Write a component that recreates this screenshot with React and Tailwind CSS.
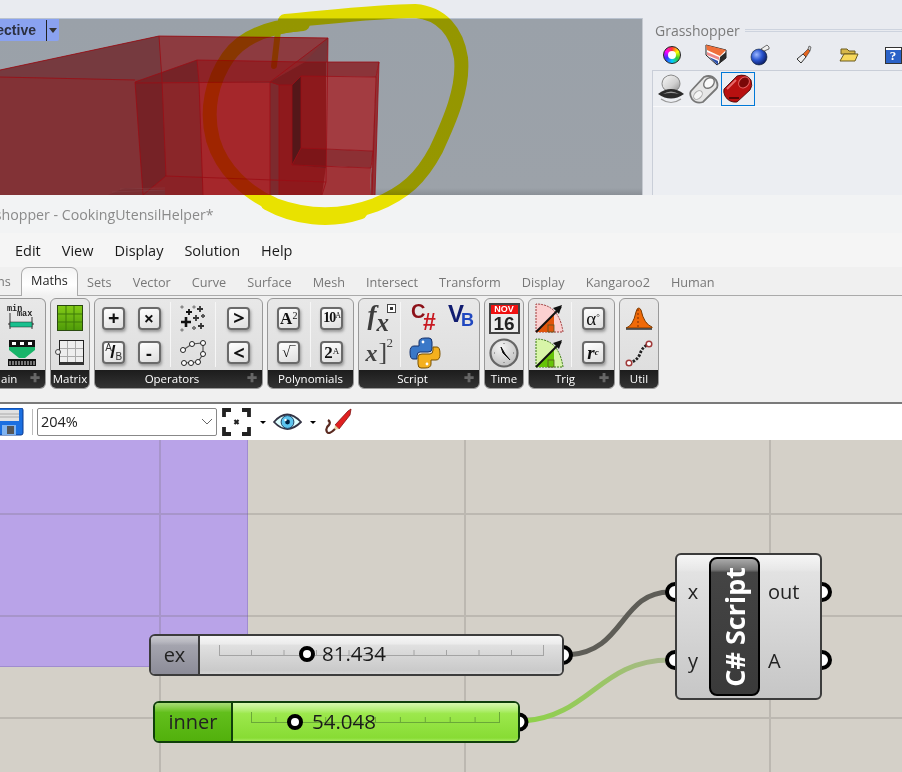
import React from "react";

const Scene = () => (
  <svg width="642" height="177" viewBox="0 18 642 177" className="block">
    <defs>
      <linearGradient id="vbg" x1="0" y1="0" x2="0" y2="1">
        <stop offset="0" stopColor="#9aa1a9" />
        <stop offset="0.96" stopColor="#9ca2a9" />
        <stop offset="1" stopColor="#8a8f96" />
      </linearGradient>
    </defs>
    <rect x="0" y="18" width="642" height="177" fill="url(#vbg)" />
    <rect x="0" y="18" width="642" height="1" fill="#b9c2cf" />
    <g stroke="none">
      <polygon points="0,70 159,36 328,38 326,195 0,195" fill="#7f3236" />
      <polygon points="0,70 159,36 162,80 0,77" fill="#763a3f" />
      <polygon points="159,36 328,38 270,82 162,80" fill="#8d3b40" />
      <polygon points="328,38 326,62 305,62" fill="#75353a" />
      <polygon points="0,77 136,80 143,195 0,195" fill="#823236" />
      <polygon points="135,82 162,80 166,176 143,195" fill="#762226" />
      <polygon points="162,80 199,81 203,177 166,176" fill="#8a2629" />
      <polygon points="135,82 197,60 199,82" fill="#762327" />
      <polygon points="197,60 305,62 270,82 199,82" fill="#8e2327" />
      <polygon points="199,82 270,83 270,195 203,195" fill="#a5272b" />
      <polygon points="166,176 203,177 203,195 143,195" fill="#8a2226" />
      <polygon points="270,82 279,85 279,195 270,195" fill="#7d2a2e" />
      <polygon points="279,85 292,85 292,165 326,168 326,195 279,195" fill="#8e191c" />
      <polygon points="292,85 301,76 301,148 292,165" fill="#541719" />
      <polygon points="301,76 326,76 326,150 301,148" fill="#8d191c" />
      <polygon points="301,148 326,149 326,168 292,165" fill="#7c1518" />
      <polygon points="326,76 376,77 373,151 326,149" fill="#a33c41" />
      <polygon points="326,149 373,151 371,168 326,166" fill="#8c3034" />
      <polygon points="326,166 371,168 370,195 322,195" fill="#a03438" />
      <polygon points="326,62 379,62 376,77 326,76" fill="#8b3439" />
      <polygon points="305,62 326,62 326,76 301,76 292,85 279,85 270,82" fill="#7b1c1f" />
      <polygon points="379,62 375,195 370,195 376,77" fill="#8f3236" />
      <polygon points="108,195 125,188 165,190 165,195" fill="#7a2d31" />
    </g>
    <g stroke="#9a0c14" strokeWidth="0.8" fill="none">
      <polyline points="0,70 159,36 328,38 270,82" />
      <polyline points="0,77 135,80" />
      <polyline points="159,36 162,80 166,176 326,182 322,195" />
      <polyline points="328,38 326,182" />
      <polyline points="135,82 197,60 305,62 379,62 375,195" />
      <polyline points="135,83 270,82 279,85 292,85" />
      <polyline points="135,82 143,195 166,176" />
      <polyline points="197,60 199,82 203,195" />
      <polyline points="270,82 270,195" />
      <polyline points="279,85 279,195" />
      <polyline points="301,76 376,77 372,195" />
      <polyline points="292,85 301,76 301,148 373,151 371,168 292,165 292,85" />
      <polyline points="292,165 301,148" />
      <polyline points="379,62 376,77" />
    </g>
    <g stroke="#8a4a50" strokeWidth="0.6" opacity="0.6">
      <line x1="112" y1="192" x2="165" y2="190" />
      <line x1="120" y1="189" x2="165" y2="188" />
    </g>
  </svg>
);

const Yellow = () => (
  <svg width="490" height="232" viewBox="0 0 490 232" className="absolute left-0 top-0 mix-blend-multiply pointer-events-none">
    <g fill="none" stroke="#f6ee00" strokeLinecap="round" strokeLinejoin="round">
      <path d="M285 21 C 330 17 380 11 415 11 C 442 13 457 32 461 58 C 464 88 450 120 436 150 C 421 178 405 193 375 205 C 340 218 305 216 275 205 C 247 193 222 170 213 140 C 205 110 212 80 228 57 C 240 40 262 27 303 24" strokeWidth="14" />
      <path d="M300 28 L 278 31 L 274 66" strokeWidth="6" />
      <path d="M360 212 C 330 222 295 218 268 203" strokeWidth="15" />
    </g>
  </svg>
);

const IconHost = ({ className, children }) => <div className={`flex items-center justify-center ${className}`}>{children}</div>;

const ColorWheel = () => (
  <div className="w-[18px] h-[18px] rounded-full border border-[#222] bg-[conic-gradient(#f33,#ff0,#3c3,#0cf,#33f,#f0f,#f33)] flex items-center justify-center">
    <div className="w-[8px] h-[8px] rounded-full bg-white" />
  </div>
);

const Wedge = () => (
  <svg width="22" height="22" viewBox="0 0 22 22">
    <path d="M1 1 L21 6 L21 14 L12 21 L1 11Z" fill="#fff" stroke="#222" strokeWidth="1" />
    <path d="M1 1 L21 6 L15 12 L2 6Z" fill="#ef6f3a" />
    <path d="M2 8 L14 13 L14 16 L2 11Z" fill="#e88" />
    <path d="M4 13 L13 17 L13 21 Z" fill="#2a4ea8" />
    <path d="M15 13 L21 8 L21 14 L14 20Z" fill="#2a2a2a" />
  </svg>
);

const Bomb = () => (
  <svg width="20" height="22" viewBox="0 0 20 22">
    <defs>
      <radialGradient id="bb" cx="0.35" cy="0.35" r="0.7">
        <stop offset="0" stopColor="#9db8ff" />
        <stop offset="0.5" stopColor="#2a55d0" />
        <stop offset="1" stopColor="#0a1a60" />
      </radialGradient>
    </defs>
    <circle cx="9" cy="13" r="8" fill="url(#bb)" stroke="#123" strokeWidth="0.6" />
    <path d="M11 5 L17 1 L19 3 L19 5 L14 7Z" fill="#eee" stroke="#333" strokeWidth="0.7" />
  </svg>
);

const Brush = () => (
  <svg width="16" height="20" viewBox="0 0 16 20">
    <path d="M1 14 L5 18 L10 12 L7 9Z" fill="#eee" stroke="#333" strokeWidth="1" />
    <path d="M7 9 L10 12 L14 6 L12 4Z" fill="#e4651f" stroke="#333" strokeWidth="0.6" />
    <path d="M12 4 L14 6 L15 2 L13 1Z" fill="#ccc" stroke="#333" strokeWidth="0.6" />
  </svg>
);

const Folder = () => (
  <svg width="20" height="16" viewBox="0 0 20 16">
    <path d="M2 2 H8 L10 4 H16 V7 H2Z" fill="#d7b84a" stroke="#6a5a20" strokeWidth="1" />
    <path d="M5 7 H19 L16 14 H1Z" fill="#f7d95c" stroke="#6a5a20" strokeWidth="1" />
  </svg>
);

const Help = () => (
  <div className="w-[17px] h-[17px] border border-[#333] bg-[#2a62c8] flex items-center justify-center overflow-hidden shadow-[inset_0_2px_0_#fff]">
    <span className="text-white font-bold text-[13px] leading-none font-['Liberation_Serif',serif]">?</span>
  </div>
);

const PanelSphere = () => (
  <svg width="28" height="32" viewBox="0 0 28 32">
    <defs>
      <linearGradient id="ps" x1="0" y1="0" x2="1" y2="1">
        <stop offset="0" stopColor="#fafafa" />
        <stop offset="0.6" stopColor="#d0d0d0" />
        <stop offset="1" stopColor="#8a8a8a" />
      </linearGradient>
    </defs>
    <path d="M7 5 Q14 -1 21 5 Q25 11 21 16 Q14 21 7 16 Q3 11 7 5Z" fill="url(#ps)" stroke="#888" strokeWidth="1" />
    <path d="M1 21 Q14 11 27 21 Q14 30 1 21Z" fill="#2a2a2a" />
    <path d="M6 21 Q14 16 22 21 Q14 19 6 21Z" fill="#999" />
    <path d="M4 26 Q14 33 24 26" fill="none" stroke="#999" strokeWidth="1.2" />
  </svg>
);

const PanelTube = () => (
  <svg width="30" height="30" viewBox="0 0 30 30">
    <path d="M2 17 L15 3 Q22 0 27 6 Q30 12 27 15 L14 28 Q7 30 3 25 Q0 20 2 17Z" fill="#e6e6e6" stroke="#777" strokeWidth="1.8" />
    <ellipse cx="20" cy="9" rx="6" ry="4.5" transform="rotate(-45 20 9)" fill="#fafafa" stroke="#777" strokeWidth="1.4" />
    <ellipse cx="9" cy="21" rx="5" ry="3.5" transform="rotate(-45 9 21)" fill="#f4f4f4" stroke="#aaa" strokeWidth="1" />
  </svg>
);

const PanelRed = () => (
  <svg width="30" height="30" viewBox="0 0 30 30">
    <path d="M1 15 L14 2 Q23 -1 28 6 Q30 12 27 16 L14 28 Q6 29 2 22 Q0 18 1 15Z" fill="#b81010" stroke="#3a0404" strokeWidth="0.8" />
    <ellipse cx="21" cy="8.5" rx="6" ry="4.8" transform="rotate(-45 21 8.5)" fill="#7a0808" stroke="#e56060" strokeWidth="1" />
    <path d="M4 15 L13 6" stroke="#e86a6a" strokeWidth="2" />
    <path d="M6 24 L16 24" stroke="#5a0505" strokeWidth="2" />
  </svg>
);

const MinMax = () => (
  <svg width="32" height="30" viewBox="0 0 32 30">
    <text x="1" y="8" fontSize="8.5" fontWeight="700" fontFamily="Liberation Mono" fill="#222">min</text>
    <text x="11" y="13" fontSize="8.5" fontWeight="700" fontFamily="Liberation Mono" fill="#222">max</text>
    <path d="M4 10 V26 M26 14 V26 M2 21 L6 21 M24 21 L28 21" stroke="#333" strokeWidth="1" />
    <rect x="4" y="19" width="22" height="5" fill="#19c08e" stroke="#222" strokeWidth="0.5" />
  </svg>
);

const Funnel = () => (
  <svg width="30" height="28" viewBox="0 0 30 28">
    <path d="M2 2 H28 V11 L18 19 H12 L2 11Z" fill="#19b56a" />
    <rect x="2" y="1" width="26" height="7" fill="#111" />
    <rect x="5" y="3" width="4" height="3" fill="#fff" />
    <rect x="13" y="3" width="4" height="3" fill="#fff" />
    <rect x="21" y="3" width="4" height="3" fill="#fff" />
    <rect x="1" y="20" width="28" height="7" fill="#111" />
    <path d="M3 22 V26 M6 22 V26 M9 22 V26 M12 22 V26 M15 22 V26 M18 22 V26 M21 22 V26 M24 22 V26 M27 22 V26" stroke="#ddd" strokeWidth="1" />
  </svg>
);

const GreenMatrix = () => (
  <svg width="26" height="26" viewBox="0 0 26 26">
    <defs>
      <linearGradient id="gm" x1="0" y1="0" x2="0" y2="1">
        <stop offset="0" stopColor="#84cc18" />
        <stop offset="1" stopColor="#4e9a08" />
      </linearGradient>
    </defs>
    <rect x="0.5" y="0.5" width="25" height="25" fill="url(#gm)" stroke="#2a4a10" />
    <path d="M9 1 V25 M17 1 V25 M1 9 H25 M1 17 H25" stroke="#3e7a08" strokeWidth="1" />
  </svg>
);

const GridMatrix = () => (
  <svg width="30" height="26" viewBox="0 0 30 26">
    <rect x="4.5" y="0.5" width="24" height="24" fill="#eee" stroke="#222" />
    <path d="M12.5 1 V24 M20.5 1 V24 M5 8.5 H28 M5 16.5 H28" stroke="#aaa" strokeWidth="1" />
    <circle cx="3" cy="12" r="2.5" fill="#eee" stroke="#444" />
    <rect x="5" y="22" width="24" height="3" fill="#333" />
  </svg>
);

const Key = ({ children, className = "" }) => (
  <div className={`relative w-[23px] h-[23px] rounded-[4px] border-2 border-[#6a6a6a] bg-[linear-gradient(160deg,#fff,#dedede)] shadow-[1px_2px_3px_#999] flex items-center justify-center text-[#111] leading-none ${className}`}>
    {children}
  </div>
);

const ABKey = () => (
  <Key className="font-['Liberation_Sans',sans-serif]">
    <span className="absolute left-[1px] top-0 text-[10px] text-[#333]">A</span>
    <span className="absolute left-[6px] top-[-1px] text-[19px] font-bold">/</span>
    <span className="absolute right-[1px] bottom-0 text-[10px] text-[#333]">B</span>
  </Key>
);

const Plus = ({ x, y, s, c = "#111" }) => (
  <path d={`M${x - s} ${y} H${x + s} M${x} ${y - s} V${y + s}`} stroke={c} strokeWidth={s > 3 ? 2.6 : 1.8} />
);

const Particles = () => (
  <svg width="28" height="28" viewBox="0 0 28 28">
    <Plus x={10} y={8} s={3} />
    <Plus x={21} y={5} s={3} c="#333" />
    <Plus x={7} y={18} s={5} />
    <Plus x={17} y={14} s={3} c="#333" />
    <Plus x={24} y={12} s={2} c="#555" />
    <Plus x={22} y={22} s={3} c="#333" />
    <Plus x={15} y={24} s={2} c="#777" />
    <Plus x={3} y={3} s={1.5} c="#888" />
    <Plus x={15} y={3} s={1.5} c="#888" />
    <Plus x={3} y={26} s={1.5} c="#888" />
  </svg>
);

const Chain = () => (
  <svg width="28" height="28" viewBox="0 0 28 28">
    <path d="M4 11 L13 5 L24 4 L24 15 L19 23 L5 24" fill="none" stroke="#555" strokeWidth="1.2" />
    {[[4, 11], [13, 5], [24, 4], [24, 15], [19, 23], [12, 24], [5, 24]].map(([x, y], i) => (
      <circle key={i} cx={x} cy={y} r="2.5" fill="#fff" stroke="#222" strokeWidth="1" />
    ))}
  </svg>
);

const FxIcon = () => (
  <div className="relative w-[30px] h-[28px] font-['Liberation_Serif',serif] italic font-bold text-[#3c3c3c]">
    <span className="absolute left-[2px] top-[-2px] text-[27px] leading-none">f</span>
    <span className="absolute left-[11px] top-[6px] text-[25px] leading-none">x</span>
    <div className="absolute right-0 top-0 w-[9px] h-[9px] border border-[#444] bg-white flex items-center justify-center">
      <div className="w-[3px] h-[3px] bg-[#333]" />
    </div>
  </div>
);

const XPow = () => (
  <div className="relative w-[30px] h-[28px] font-['Liberation_Serif',serif] text-[#444]">
    <span className="absolute left-0 top-[2px] text-[24px] leading-none italic font-bold">x</span>
    <span className="absolute left-[13px] top-[0px] text-[26px] leading-none font-normal">]</span>
    <span className="absolute left-[21px] top-[-3px] text-[13px] leading-none">2</span>
  </div>
);

const CSharp = () => (
  <div className="relative w-[28px] h-[28px] font-['Liberation_Sans',sans-serif] font-bold leading-none">
    <span className="absolute left-0 top-[-3px] text-[20px] text-[#8c1018]">C</span>
    <span className="absolute left-[12px] top-[7px] text-[23px] text-[#c81820]">#</span>
  </div>
);

const VB = () => (
  <div className="relative w-[28px] h-[28px] font-['Liberation_Sans',sans-serif] font-bold leading-none">
    <span className="absolute left-0 top-[-2px] text-[24px] text-[#101c70]">V</span>
    <span className="absolute left-[13px] top-[7px] text-[18px] text-[#2048c0]">B</span>
  </div>
);

const Python = () => (
  <svg width="32" height="32" viewBox="0 0 32 32">
    <path d="M10 9 V5 Q10 1 16 1 H20 Q23 1 23 5 V12 Q23 15 19 15 H11 Q8 15 8 19 V22 H4 Q1 22 1 15 Q1 9 5 9Z" fill="#3a78c8" stroke="#15306a" strokeWidth="1" />
    <path d="M22 23 V27 Q22 31 16 31 H12 Q9 31 9 27 V20 Q9 17 13 17 H21 Q24 17 24 13 V10 H28 Q31 10 31 17 Q31 23 27 23Z" fill="#f4b01e" stroke="#7a5200" strokeWidth="1" />
    <circle cx="14" cy="5" r="1.4" fill="#fff" />
    <circle cx="18" cy="27" r="1.4" fill="#fff" />
  </svg>
);

const Calendar = () => (
  <div className="w-[31px] h-[31px] border-2 border-[#444] bg-[#ececec] flex flex-col items-center font-['Liberation_Sans',sans-serif] overflow-hidden">
    <div className="w-full h-[9px] bg-[#f01010] text-white text-[9px] font-bold leading-[9px] text-center">NOV</div>
    <div className="text-[#222] text-[19px] font-bold leading-[19px]">16</div>
  </div>
);

const Clock = () => (
  <svg width="30" height="30" viewBox="0 0 30 30">
    <defs>
      <radialGradient id="clk" cx="0.4" cy="0.3" r="0.8">
        <stop offset="0" stopColor="#f4f4f4" />
        <stop offset="1" stopColor="#bbb" />
      </radialGradient>
    </defs>
    <circle cx="15" cy="15" r="13.5" fill="url(#clk)" stroke="#666" strokeWidth="2.2" />
    <path d="M16 16 L12 9 L14 15 L21 22Z" fill="#111" stroke="#111" strokeWidth="1" />
    <path d="M5 15 H6 M24 15 H25 M15 5 V6 M15 24 V25" stroke="#666" />
  </svg>
);

const TrigIcon = ({ fill, dark, stroke }) => (
  <svg width="30" height="32" viewBox="0 0 30 32">
    <path d="M1 30 V2 Q24 2 28 30Z" fill={fill} stroke={stroke} strokeWidth="1" strokeDasharray="2 1" />
    <path d="M1 30 L19 12 L19 30Z" fill={dark} />
    <path d="M1 30 L26 5" stroke="#111" strokeWidth="2" />
    <path d="M27 3 L18 6 L24 12Z" fill="#111" />
    <rect x="13" y="23" width="6" height="7" fill="none" stroke="#552" strokeWidth="0.8" />
  </svg>
);

const NormalDist = () => (
  <svg width="28" height="24" viewBox="0 0 28 24">
    <path d="M1 22 Q8 20 11 6 Q13 -1 16 4 Q19 18 27 21 L27 22Z" fill="#f06a08" stroke="#7a3a00" strokeWidth="1" />
    <path d="M13 3 V22" stroke="#7a2a00" strokeDasharray="2 2" />
    <path d="M1 23 H27" stroke="#333" strokeWidth="1.4" />
  </svg>
);

const DotCurve = () => (
  <svg width="28" height="28" viewBox="0 0 28 28">
    <path d="M4 24 Q12 22 15 15 Q17 8 24 5" fill="none" stroke="#222" strokeWidth="2.8" strokeDasharray="2.5 1.4" />
    <circle cx="4" cy="24" r="2.8" fill="#fff" stroke="#a03a3a" strokeWidth="1.5" />
    <circle cx="24" cy="5" r="2.8" fill="#fff" stroke="#a03a3a" strokeWidth="1.5" />
  </svg>
);

const Floppy = () => (
  <svg width="24" height="28" viewBox="0 0 24 28">
    <rect x="-3" y="0" width="26" height="27" rx="2" fill="#1b6fe0" stroke="#0b3a90" />
    <rect x="0" y="2" width="19" height="11" fill="#e2e2e2" />
    <path d="M0 6 H19 M0 9 H19" stroke="#aaa" />
    <rect x="2" y="17" width="14" height="10" fill="#7fb3f0" />
    <rect x="7" y="18" width="7" height="8" fill="#555" />
  </svg>
);

const Focus = () => (
  <svg width="29" height="28" viewBox="0 0 29 28">
    <path d="M9 2 H2 V9 M20 2 H27 V9 M2 19 V26 H9 M27 19 V26 H20" fill="none" stroke="#222" strokeWidth="3.8" />
    <path d="M12.5 12 L16.5 16 M16.5 12 L12.5 16" stroke="#222" strokeWidth="2.2" />
  </svg>
);

const Eye = () => (
  <svg width="29" height="20" viewBox="0 0 29 20">
    <path d="M1 10 Q14 -5 28 10 Q14 24 1 10Z" fill="#dff" stroke="#334" strokeWidth="1.8" />
    <circle cx="14.5" cy="10" r="6.4" fill="#5cc4ee" stroke="#246" strokeWidth="1" />
    <circle cx="14.5" cy="10" r="2.4" fill="#024" />
    <circle cx="12.5" cy="8" r="1.2" fill="#fff" />
  </svg>
);

const Sketch = () => (
  <svg width="28" height="28" viewBox="0 0 28 28">
    <path d="M11 17 L24 3 L27 1 L26 7 L15 21Z" fill="#e02020" stroke="#801010" strokeWidth="0.8" />
    <path d="M11 17 L15 21 L10 22Z" fill="#e8d0a0" />
    <path d="M11 21 Q5 27 3 24 Q1 20 5 17 Q7 14 4 12" fill="none" stroke="#5a2a20" strokeWidth="2.2" />
  </svg>
);

const Arrow = () => <div className="w-0 h-0 border-x-[3px] border-x-transparent border-t-[3px] border-t-black" />;

const Sep = ({ className = "" }) => (
  <div className={`w-px self-stretch my-[3px] bg-[#cfcfcf] border-r border-[#f6f6f6] ${className}`} />
);

const Col = ({ className, top, bottom }) => (
  <div className={`flex flex-col h-full ${className}`}>
    <IconHost className="h-[36px] pt-[2px]">{top}</IconHost>
    <IconHost className="h-[35px]">{bottom}</IconHost>
  </div>
);

const Group = ({ className, label, plus, children, bodyClass = "" }) => (
  <div className={`h-[91px] shrink-0 rounded-[6px] border border-[#999] bg-[linear-gradient(#e8e8e8,#dcdcdc)] overflow-hidden flex flex-col ${className}`}>
    <div className={`h-[72px] flex ${bodyClass}`}>{children}</div>
    <div className={`relative h-[18px] bg-[linear-gradient(#1c1c1c,#333)] text-white text-[11.5px] leading-[17px] text-center whitespace-nowrap ${plus ? "pr-[13px]" : ""}`}>
      {label}
      {plus && <span className="absolute right-[5px] top-0 text-[#666] font-bold text-[12px] leading-[16px]">✚</span>}
    </div>
  </div>
);

const Slider = ({ className, labelClass, label, value, frame, body, ticks, handleClass, valueClass }) => (
  <div className={`absolute flex h-[42px] rounded-[6px] border-2 overflow-hidden ${frame} ${className}`}>
    <div className={`h-full flex items-center justify-center text-[20px] text-[#222] ${labelClass}`}>{label}</div>
    <div className={`relative flex-1 ${body}`}>
      {ticks}
      <div className={`absolute w-[16px] h-[16px] rounded-full border-[4px] border-black bg-white ${handleClass}`} />
      <div className={`absolute text-[20.5px] leading-none text-[#1a1a1a] ${valueClass}`}>{value}</div>
    </div>
  </div>
);

const Ticks = ({ w, h = 11, n = 10, color = "#a4a4a4", className }) => {
  let d = `M0.5 0 V${h} M${w - 0.5} 0 V${h} M0 ${h - 0.5} H${w}`;
  for (let i = 1; i < n; i++) d += ` M${(w / n) * i} ${h - 6} V${h}`;
  return (
    <svg width={w} height={h} className={`absolute ${className}`}>
      <path d={d} stroke={color} strokeWidth="1" fill="none" />
    </svg>
  );
};

const tabs = ["Sets", "Vector", "Curve", "Surface", "Mesh", "Intersect", "Transform", "Display", "Kangaroo2", "Human"];

export default function App() {
  return (
    <div className="relative w-[902px] h-[772px] overflow-hidden bg-[#f0f0f0] font-['Open_Sans','Noto_Sans',sans-serif] text-[#222]">
      {/* Rhino window */}
      <div className="flex h-[195px] bg-[#e9ebf0]">
        <div className="w-[642px] pt-[18px] shrink-0">
          <div className="relative w-[642px] h-[177px]">
            <Scene />
            <div className="absolute left-0 top-[1px] w-[59px] h-[22px] bg-[#8aa2f0] rounded-br-[2px] flex items-center overflow-hidden">
              <div className="w-[46px] shrink-0 flex justify-end pr-[10px]">
                <span className="text-[14px] font-bold leading-none text-[#2c3040] font-['Liberation_Sans',sans-serif]">ective</span>
              </div>
              <div className="w-px h-[21px] bg-[#222]" />
              <div className="ml-[2px] w-0 h-0 border-x-[4px] border-x-transparent border-t-[5px] border-t-[#333]" />
            </div>
          </div>
        </div>
        <div className="w-[1px] mt-[18px] bg-[#c5c9d0]" />
        <div className="flex-1 flex flex-col pl-[9px] min-w-0">
          <div className="h-[70px] flex flex-col">
            <div className="flex items-center gap-[5px] pt-[20px] pl-[3px] h-[40px]">
              <span className="text-[14px] leading-[17px] text-[#7a7a7a] font-['Open_Sans',sans-serif]">Grasshopper</span>
              <div className="flex-1 h-[3px] border-y border-[#cdd3de]" />
            </div>
            <div className="flex h-[30px] items-center pl-[11px] gap-0 overflow-hidden">
              <IconHost className="w-[18px] shrink-0"><ColorWheel /></IconHost>
              <IconHost className="w-[26px] ml-[22px] shrink-0"><Wedge /></IconHost>
              <IconHost className="w-[20px] ml-[21px] shrink-0"><Bomb /></IconHost>
              <IconHost className="w-[20px] ml-[24px] shrink-0"><Brush /></IconHost>
              <IconHost className="w-[20px] ml-[25px] shrink-0"><Folder /></IconHost>
              <IconHost className="w-[20px] ml-[24px] shrink-0"><Help /></IconHost>
            </div>
          </div>
          <div className="flex-1 border-t border-l border-[#c9ced8] bg-[#eceef2]">
            <div className="h-[36px] border-b border-[#f8f8fa] flex items-center pl-[2px]">
              <IconHost className="w-[32px]"><PanelSphere /></IconHost>
              <IconHost className="w-[33px]"><PanelTube /></IconHost>
              <IconHost className="w-[34px] h-[34px] ml-[1px] border border-[#0078d7]"><PanelRed /></IconHost>
            </div>
          </div>
        </div>
      </div>

      {/* Title */}
      <div className="h-[38px] bg-[#f2f3f4] flex items-center overflow-hidden">
        <span className="text-[14.2px] text-[#8a8a8a] whitespace-nowrap ml-[-12px] pt-[2px]">sshopper - CookingUtensilHelper*</span>
      </div>

      {/* Menu */}
      <div className="h-[34px] bg-[#f5f5f5] flex items-center pl-[15px] pt-[2px] gap-[21px] text-[14.5px] text-[#1a1a1a]">
        <span>Edit</span>
        <span>View</span>
        <span>Display</span>
        <span>Solution</span>
        <span>Help</span>
      </div>

      {/* Tabs */}
      <div className="relative h-[29px] bg-[#f0f0f0] flex items-end border-b border-[#aaa] text-[12.7px] text-[#777] font-['Open_Sans',sans-serif]">
        <span className="w-[21px] shrink-0 pb-[5px] overflow-hidden"><span className="ml-[-3px] block leading-[18px]">ns</span></span>
        <div className="w-[57px] h-[29px] shrink-0 mb-[-1px] rounded-t-[7px] border border-b-0 border-[#aaa] bg-[linear-gradient(#f4f4f4,#fff_60%,#f0f0f0)] flex items-center justify-center text-[#222] pb-[2px]">Maths</div>
        <div className="flex gap-[21px] pl-[9px] pb-[4px] leading-[18px] whitespace-nowrap">
          {tabs.map((t) => (<span key={t}>{t}</span>))}
        </div>
      </div>

      {/* Ribbon */}
      <div className="h-[106px] pt-[2px] flex gap-[4px] bg-[#f0f0f0] items-start">
        <Group className="w-[46px] rounded-l-none border-l-0" label={<span className="block text-left ml-[1px]">ain</span>} plus>
          <Col className="w-full pr-[1px]" top={<MinMax />} bottom={<Funnel />} />
        </Group>
        <Group className="w-[40px]" label="Matrix">
          <Col className="w-full" top={<GreenMatrix />} bottom={<GridMatrix />} />
        </Group>
        <Group className="w-[169px]" label="Operators" plus>
          <Col className="w-[38px]" top={<Key><span className="font-bold text-[20px]">+</span></Key>} bottom={<ABKey />} />
          <Col className="w-[34px]" top={<Key><span className="font-bold text-[18px]">×</span></Key>} bottom={<Key><span className="font-bold text-[18px]">-</span></Key>} />
          <Sep className="ml-[4px]" />
          <Col className="w-[45px]" top={<Particles />} bottom={<Chain />} />
          <Sep />
          <Col className="w-[47px]" top={<Key><span className="font-bold text-[20px]">&gt;</span></Key>} bottom={<Key><span className="font-bold text-[20px]">&lt;</span></Key>} />
        </Group>
        <Group className="w-[87px]" label="Polynomials">
          <Col className="w-[42px]" top={<Key className="font-['Liberation_Serif',serif]"><span className="font-bold text-[17px]">A<sup className="text-[10px] font-normal">2</sup></span></Key>} bottom={<Key><span className="text-[15px] font-['Liberation_Serif',serif]">√‾</span></Key>} />
          <Sep />
          <Col className="w-[43px]" top={<Key className="font-['Liberation_Serif',serif]"><span className="font-bold text-[14px] tracking-[-1px]">10<sup className="text-[8px] font-normal">A</sup></span></Key>} bottom={<Key className="font-['Liberation_Serif',serif]"><span className="font-bold text-[17px]">2<sup className="text-[9px] font-normal">A</sup></span></Key>} />
        </Group>
        <Group className="w-[122px]" label="Script" plus>
          <Col className="w-[41px] pl-[2px]" top={<FxIcon />} bottom={<XPow />} />
          <Sep />
          <Col className="w-[47px] pl-[1px]" top={<CSharp />} bottom={<Python />} />
          <Col className="w-[26px]" top={<VB />} bottom={<div />} />
        </Group>
        <Group className="w-[40px]" label="Time">
          <Col className="w-full" top={<Calendar />} bottom={<Clock />} />
        </Group>
        <Group className="w-[87px]" label="Trig" plus>
          <Col className="w-[43px]" top={<TrigIcon fill="#fbd0d0" dark="#e0540a" stroke="#a03a3a" />} bottom={<TrigIcon fill="#d8f5a8" dark="#66c408" stroke="#3a7a10" />} />
          <Sep />
          <Col className="w-[43px]" top={<Key className="font-['Liberation_Serif',serif]"><span className="text-[19px]">α<sup className="text-[9px]">°</sup></span></Key>} bottom={<Key className="font-['Liberation_Serif',serif]"><span className="text-[19px] font-bold italic">r<sup className="text-[9px]">c</sup></span></Key>} />
        </Group>
        <Group className="w-[40px]" label="Util">
          <Col className="w-full" top={<NormalDist />} bottom={<DotCurve />} />
        </Group>
      </div>

      {/* Toolbar */}
      <div className="h-[38px] bg-white border-t-2 border-[#7a7a7a] flex items-center">
        <Floppy />
        <div className="w-px h-[26px] bg-[#bbb] ml-[8px]" />
        <div className="w-[180px] h-[28px] ml-[4px] border border-[#888] rounded-[2px] bg-white flex items-center justify-between pl-[3px] pr-[3px] text-[14.5px] text-[#222]">
          <span>204%</span>
          <svg width="12" height="8" viewBox="0 0 12 8"><path d="M1 1 L6 6 L11 1" fill="none" stroke="#666" strokeWidth="1" /></svg>
        </div>
        <IconHost className="w-[29px] ml-[5px]"><Focus /></IconHost>
        <div className="ml-[9px]"><Arrow /></div>
        <IconHost className="w-[29px] ml-[7px]"><Eye /></IconHost>
        <div className="ml-[8px]"><Arrow /></div>
        <IconHost className="w-[28px] ml-[8px]"><Sketch /></IconHost>
      </div>

      {/* Canvas */}
      <div className="relative h-[332px] bg-[#d4d0c8]">
        <div className="absolute left-0 top-0 w-[248px] h-[227px] bg-[#b9a3e8] border-r border-b border-[#a08cd0]" />
        <svg width="902" height="332" viewBox="0 440 902 332" className="absolute left-0 top-0">
          <defs>
            <linearGradient id="gw" gradientUnits="userSpaceOnUse" x1="528" y1="721" x2="668" y2="660">
              <stop offset="0" stopColor="#8ed14a" />
              <stop offset="0.6" stopColor="#9cc46a" />
              <stop offset="1" stopColor="#a9b68f" />
            </linearGradient>
          </defs>
          <g stroke="#6a6460" strokeOpacity="0.22" strokeWidth="2">
            <path d="M160 440 V772 M465 440 V772 M770 440 V772 M0 514 H902 M0 616 H902 M0 718 H902" />
          </g>
          <path d="M568 655 C 625 652 620 592 670 592" fill="none" stroke="#5e5d57" strokeWidth="5" />
          <path d="M524 721 C 590 716 600 660 670 660" fill="none" stroke="url(#gw)" strokeWidth="5" />
          <g fill="#fff" stroke="#000" strokeWidth="4">
            <circle cx="563" cy="655" r="8" />
            <circle cx="519" cy="722" r="7.5" />
            <circle cx="675" cy="592" r="8" />
            <circle cx="675" cy="660" r="8" />
            <circle cx="822" cy="592" r="8" />
            <circle cx="822" cy="660" r="8" />
          </g>
        </svg>

        <Slider
          className="left-[149px] top-[194px] w-[415px]"
          frame="border-[#3c3c3c]"
          labelClass="w-[49px] border-r-2 border-[#3c3c3c] bg-[linear-gradient(#c8c8ce_0,#b8b8c0_15%,#a4a4ae_25%,#8c8c98_100%)] font-['Open_Sans',sans-serif]"
          label="ex"
          value="81.434"
          body="bg-[linear-gradient(#f6f6f6_0,#ececec_20%,#e0e0e0_25%,#cacaca_90%,#d4d4d4_100%)]"
          ticks={<Ticks w={325} className="left-[19px] top-[9px]" />}
          handleClass="left-[99px] top-[10px]"
          valueClass="left-[122px] top-[7px]"
        />
        <Slider
          className="left-[153px] top-[261px] w-[367px]"
          frame="border-[#0f3f0a]"
          labelClass="w-[78px] border-r-2 border-[#0f3f0a] bg-[linear-gradient(#a8dc78_0,#80cc40_15%,#62bf1c_25%,#52b00c_100%)]"
          label="inner"
          value="54.048"
          body="bg-[linear-gradient(#d8f8b0_0,#b0ee70_20%,#9ce84c_28%,#88dc34_92%,#a8ea60_100%)]"
          ticks={<Ticks w={249} color="#6aa838" className="left-[18px] top-[9px]" />}
          handleClass="left-[54px] top-[11px]"
          valueClass="left-[79px] top-[8px]"
        />

        {/* C# node */}
        <div className="absolute left-[675px] top-[113px] w-[147px] h-[147px] rounded-[6px] border-2 border-[#3c3c3c] bg-[linear-gradient(#f6f6f6_0,#e8e8e8_10%,#e2e2e2_12%,#c6c6c6_100%)] flex text-[20px] text-[#222]">
          <div className="w-[32px] flex flex-col items-center justify-around py-[8px] leading-none">
            <span className="pb-[8px]">x</span>
            <span className="pt-[4px]">y</span>
          </div>
          <div className="w-[51px] my-[2px] rounded-[8px] border-2 border-black bg-[linear-gradient(#aaa_0,#777_8%,#444_10%,#3a3a3a_100%)] flex items-center justify-center">
            <span className="[writing-mode:vertical-rl] rotate-180 text-white font-bold text-[27px] leading-none whitespace-nowrap font-['Open_Sans',sans-serif]">C# Script</span>
          </div>
          <div className="flex-1 flex flex-col justify-around py-[8px] pl-[8px] leading-none">
            <span className="pb-[8px]">out</span>
            <span className="pt-[4px]">A</span>
          </div>
        </div>
      </div>

      <Yellow />
    </div>
  );
}
